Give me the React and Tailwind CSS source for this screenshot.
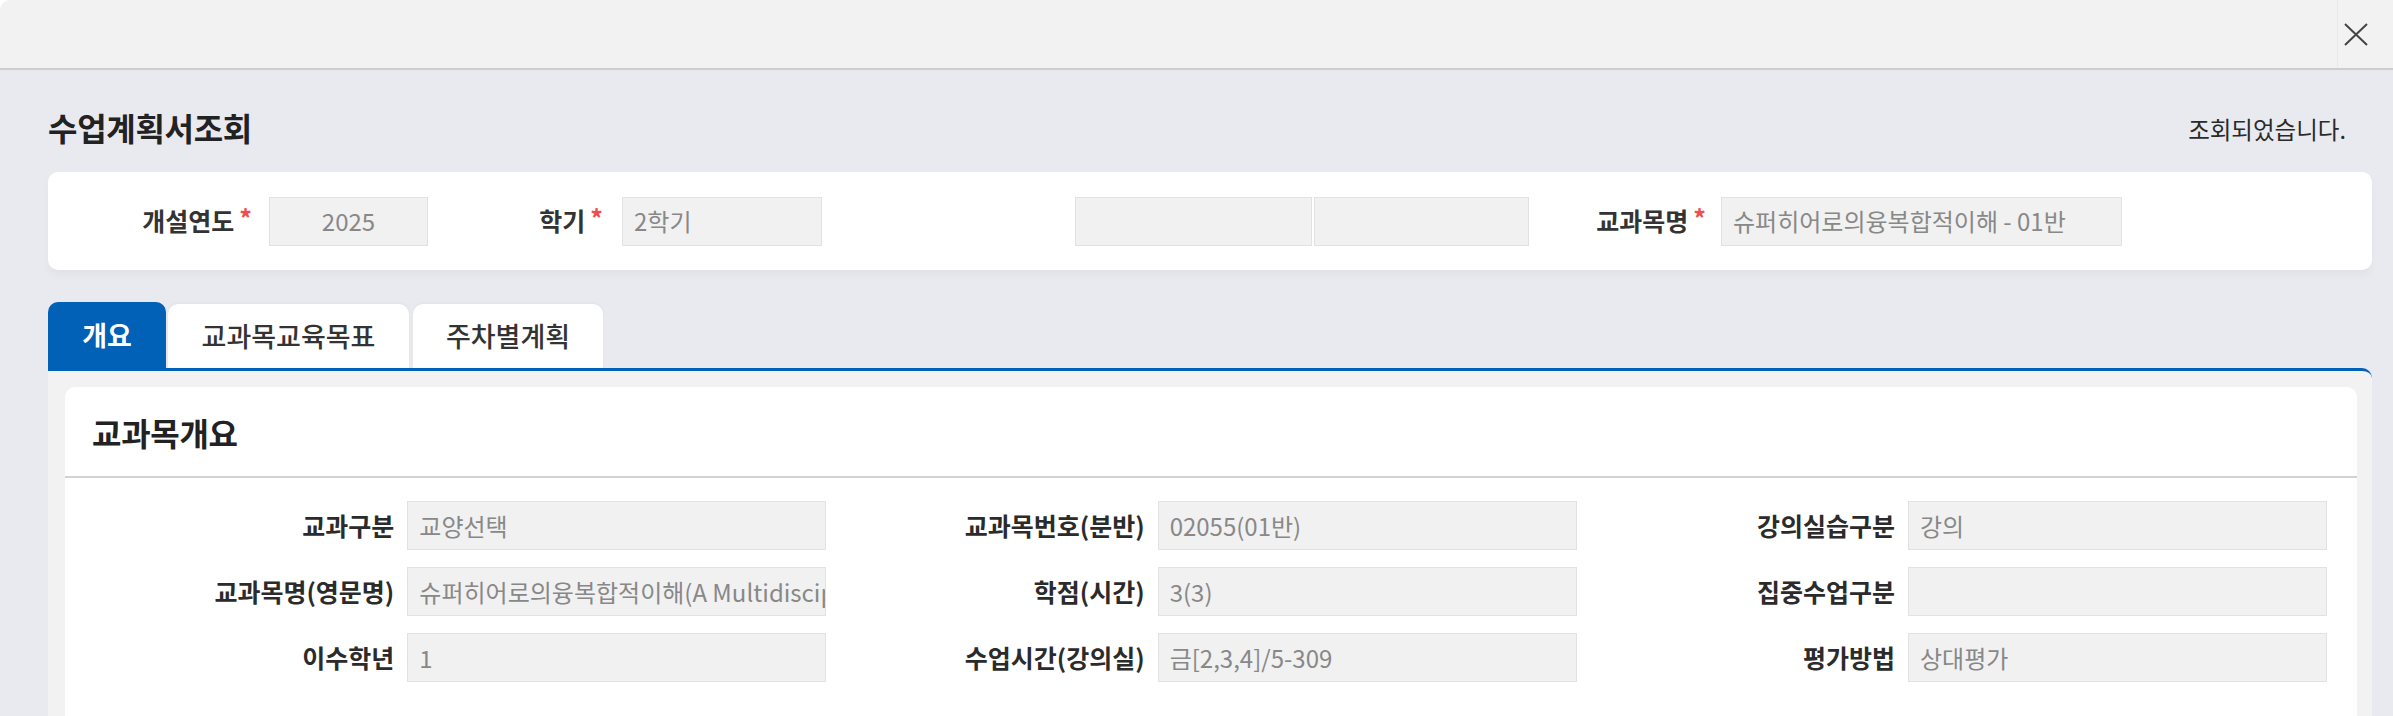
import React from 'react';

const font = "font-['Noto_Sans_CJK_KR','Noto_Sans',sans-serif]";

const Req = () => <span className="ml-[5px] text-[#f04e4e] text-[25px] font-bold relative top-[-3px]">*</span>;

const SearchLabel = ({ w, children, req = true }) => (
  <div className={`${w} flex justify-end items-center text-[25px] font-bold text-[#333] whitespace-nowrap`}>
    {children}
    {req && <Req />}
  </div>
);

const Box = ({ w, children, center, className = '' }) => (
  <div
    className={`${w} h-[49px] bg-[#f1f1f1] border border-[#e2e2e2] flex items-center text-[24px] text-[#888] whitespace-nowrap overflow-hidden ${center ? 'justify-center' : 'px-[11px]'} ${className}`}
  >
    {children}
  </div>
);

const rows = [
  ['교과구분', '교양선택', '교과목번호(분반)', '02055(01반)', '강의실습구분', '강의'],
  ['교과목명(영문명)', '슈퍼히어로의융복합적이해(A Multidisciplinary Understanding of Superheroes)', '학점(시간)', '3(3)', '집중수업구분', ''],
  ['이수학년', '1', '수업시간(강의실)', '금[2,3,4]/5-309', '평가방법', '상대평가'],
];

const Field = ({ label, value }) => (
  <div className="flex items-center gap-[13px]">
    <div className="flex-1 text-right text-[25px] font-semibold text-[#2b2b2b] whitespace-nowrap">{label}</div>
    <Box w="w-[419px]">{value}</Box>
  </div>
);

export default function App() {
  return (
    <div className={`w-[2393px] h-[716px] overflow-hidden bg-white ${font}`}>
      {/* top bar */}
      <div className="h-[70px] bg-[#f2f2f2] border-b-2 border-[#cdcdcd] rounded-tl-[10px] flex justify-end">
        <button className="w-[56px] h-[68px] border-l border-[#e9e9e9] flex items-center pl-[6px]">
          <svg width="24" height="23" viewBox="0 0 24 23" fill="none" stroke="#444" strokeWidth="2">
            <path d="M1 1L23 22M23 1L1 22" />
          </svg>
        </button>
      </div>

      <div className="h-[646px] bg-[#e9eaf0] pl-[48px] pr-[21px]">
        <div className="h-[102px] pt-[12px] flex items-center justify-between">
          <h1 className="text-[32px] font-bold text-[#222] tracking-[-0.3px]">수업계획서조회</h1>
          <span className="mt-[6px] mr-[26px] text-[23.5px] text-[#2a2a2a]">조회되었습니다.</span>
        </div>

        {/* search card */}
        <div className="h-[98px] bg-white rounded-[10px] shadow-[0_6px_10px_rgba(0,0,0,0.03)] flex items-center">
          <SearchLabel w="w-[204px]">개설연도</SearchLabel>
          <Box w="w-[159px] ml-[17px]" center>2025</Box>
          <SearchLabel w="w-[175px]">학기</SearchLabel>
          <Box w="w-[200px] ml-[19px]">2학기</Box>
          <div className="w-[253px]" />
          <Box w="w-[237px]" />
          <Box w="w-[215px] ml-[2px]" />
          <SearchLabel w="w-[177px]">교과목명</SearchLabel>
          <Box w="w-[401px] ml-[15px]">슈퍼히어로의융복합적이해 - 01반</Box>
        </div>

        {/* tabs */}
        <div className="mt-[32px] h-[66px] flex items-end">
          <div className="w-[118px] h-[66px] bg-[#0061b7] rounded-t-[10px] flex items-center justify-center text-[27px] font-bold text-white">
            개요
          </div>
          <div className="ml-[2px] w-[241px] h-[64px] bg-white rounded-t-[10px] shadow-[0_-1px_3px_rgba(0,0,0,0.04)] flex items-center justify-center text-[27px] font-medium text-[#333]">
            교과목교육목표
          </div>
          <div className="ml-[4px] w-[190px] h-[64px] bg-white rounded-t-[10px] shadow-[0_-1px_3px_rgba(0,0,0,0.04)] flex items-center justify-center text-[27px] font-medium text-[#333]">
            주차별계획
          </div>
        </div>

        {/* panel */}
        <div className="h-[400px] border-t-[3px] border-[#0061b7] rounded-tr-[10px] bg-[#f2f2f3] pl-[17px] pr-[15px] pt-[16px]">
          <div className="h-[400px] bg-white rounded-[10px]">
            <div className="h-[91px] pl-[27px] flex items-center border-b-2 border-[#d2d2d2]">
              <h2 className="text-[32px] font-bold text-[#222] tracking-[-0.3px]">교과목개요</h2>
            </div>
            <div className="pt-[23px] pl-[11px] pr-[30px] grid grid-cols-3 gap-y-[17px]">
              {rows.map((r, i) => (
                <React.Fragment key={i}>
                  <Field label={r[0]} value={r[1]} />
                  <Field label={r[2]} value={r[3]} />
                  <Field label={r[4]} value={r[5]} />
                </React.Fragment>
              ))}
            </div>
          </div>
        </div>
      </div>
    </div>
  );
}
